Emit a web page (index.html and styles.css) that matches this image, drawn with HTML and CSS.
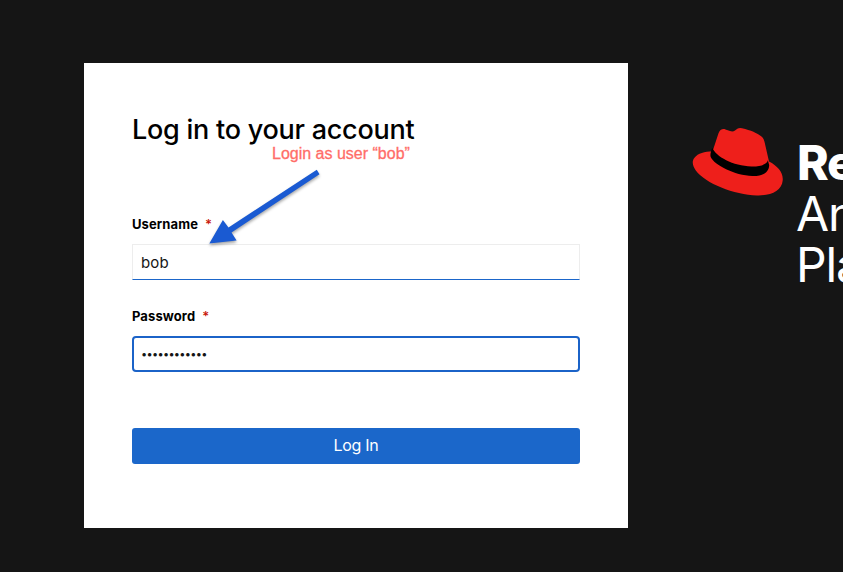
FILE: index.html
```html
<!DOCTYPE html>
<html lang="en">
<head>
<meta charset="utf-8">
<title>Log in</title>
<link rel="stylesheet" href="styles.css">
</head>
<body>
<div class="page">
  <main class="card">
    <h1 class="title"><span class="title-text">Log in to your account</span></h1>
    <form class="form">
      <label class="label" for="user"><span class="user-label">Username</span><span class="required">*</span></label>
      <input class="input" id="user" type="text" value="bob">
      <label class="label" for="pass"><span class="pass-label">Password</span><span class="required">*</span></label>
      <div class="input focused" id="pass"><span class="dots">••••••••••••</span></div>
      <button class="button" type="button"><span class="button-text">Log In</span></button>
    </form>
    <div class="note">Login as user “bob”</div>
    <svg class="arrow" width="130" height="90" viewBox="0 0 130 90">
      <path d="M116.8 9.8 28.5 67.5 22.9 60 9.3 83.5 36.6 80.6 31.5 72.5 119.5 14.2Z" fill="#1a5ad2"/>
    </svg>
  </main>
  <aside class="brand">
    <svg class="hat" width="92" height="70" viewBox="0 0 92 70">
      <path d="M21.5 24.5 27.5 6.2C28.7 3 31.3 1.4 34.5 2.4L39 4.1Q42 5 44 3.5L46.3 1.7Q48.2.7 51 1.2C60 3.2 66 6 70.5 9.6Q73 11.5 73.5 14.8L78 34.5C86.5 38.8 92.5 45.5 91.7 53.5 90.7 63.8 80 68.8 66 68.4 43 67.8 14.5 56.5 4.8 43.5 1.2 38.5.8 34 3.5 30.7 7 26.2 13.5 24.5 21.5 24.5Z" fill="#ee1f1b"/>
      <path d="M21.3 20.8C24.8 29.5 42 39.2 60.5 39.4 69 39.6 75.6 37.7 76.9 33.2L78.2 38.2C77.8 45.3 72 49.4 61.4 49.1 43.5 48.5 23.2 38 19.7 30.1 18.9 27.3 19.9 24.8 21.3 20.8Z" fill="#000"/>
    </svg>
    <div class="brand-text"><strong class="brand-name">Red Hat</strong><span>Ansible Automation</span><span>Platform</span></div>
  </aside>
</div>
</body>
</html>
```
FILE: styles.css
```css
* { box-sizing: border-box; }
body { margin: 0; background: #151515; font-family: Inter, sans-serif; color: #151515; }
.page { width: 843px; height: 572px; display: flex; align-items: flex-start; padding: 63px 0 0 84px; overflow: hidden; }
.card { position: relative; flex: none; width: 544px; height: 465px; padding: 48px; background: #fff; }
.title { margin: 0; height: 36px; font-size: 27px; line-height: 37px; font-weight: 500; letter-spacing: -.25px; color: #000; white-space: nowrap; }
.form { display: flex; flex-direction: column; margin-top: 67px; }
.label { display: flex; height: 21px; margin-bottom: 9px; font-size: 13px; line-height: 21px; font-weight: 700; letter-spacing: .1px; color: #000; }
.required { margin-left: 7px; color: #c9190b; font-weight: 600; }
.input { display: flex; align-items: center; width: 100%; height: 36px; margin: 0 0 26px; padding: 0 8px; border: 1px solid #ededed; border-bottom-color: #1b66ca; border-radius: 0; outline: 0; background: #fff; color: #151515; font: 400 15px Inter, sans-serif; letter-spacing: .1px; }
.focused { border: 2px solid #1b63c8; border-radius: 4px; padding: 0 7px 1px; }
.dots { font-size: 11px; letter-spacing: -.71px; }
.button { height: 36px; margin-top: 30px; padding: 0 0 2px; border: 0; border-radius: 3px; background: #1b67ca; color: #fff; font: 400 16px/34px Inter, sans-serif; letter-spacing: -.3px; }
.note { position: absolute; left: 188px; top: 81px; font: 16px/19px "Liberation Sans", sans-serif; letter-spacing: 0; color: #ff6d68; -webkit-text-stroke: .3px #ff6d68; white-space: nowrap; }
.arrow { position: absolute; left: 116px; top: 97px; filter: drop-shadow(0 2px 1.5px rgba(0, 0, 0, .35)); }
.brand { display: flex; flex: none; margin: 64px 0 0 63px; }
.hat { flex: none; }
.brand-text { display: flex; flex-direction: column; margin: 10px 0 0 13px; color: #fff; font-size: 48px; line-height: 51px; letter-spacing: -1.2px; white-space: nowrap; }
.brand-name { padding-left: 1px; font-weight: 800; }
```
